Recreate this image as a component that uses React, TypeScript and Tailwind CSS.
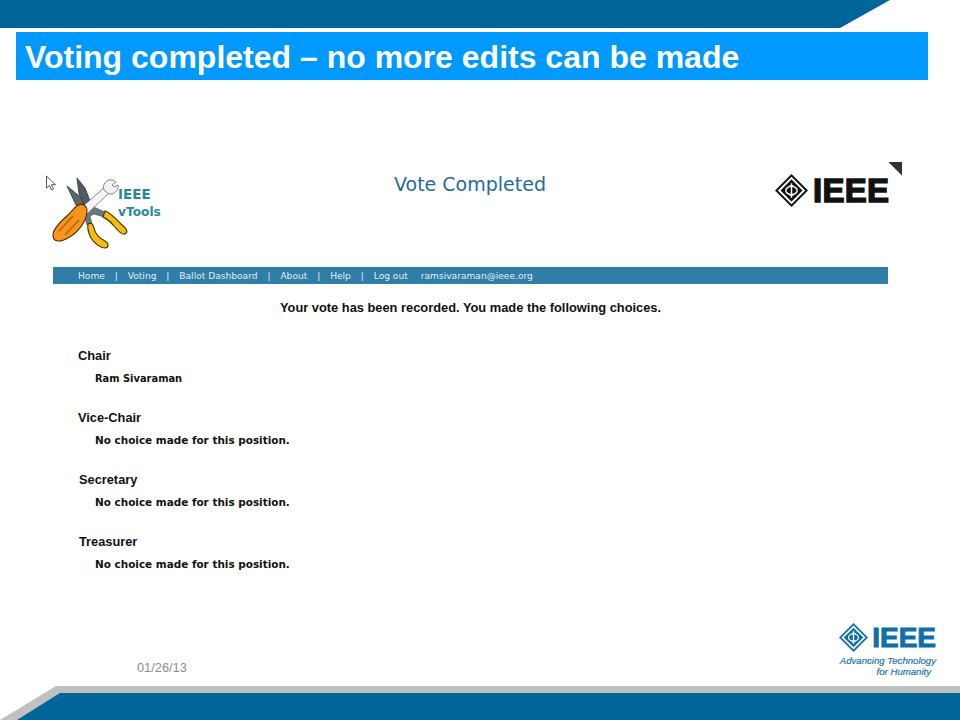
import React from "react";

const sans = "font-['Liberation_Sans',Arial,sans-serif]";
const verdana = "font-['DejaVu_Sans',Verdana,sans-serif]";

const navItems = ["Home", "Voting", "Ballot Dashboard", "About", "Help", "Log out"];

const positions = [
  { title: "Chair", choice: "Ram Sivaraman", indent: "ml-[78px]", size: "text-[9.9px]" },
  { title: "Vice-Chair", choice: "No choice made for this position.", indent: "ml-[78px]", size: "text-[10.45px]" },
  { title: "Secretary", choice: "No choice made for this position.", indent: "ml-[79px]", size: "text-[10.45px]" },
  { title: "Treasurer", choice: "No choice made for this position.", indent: "ml-[79px]", size: "text-[10.45px]" },
];

function Diamond({ size, outer, inner }: { size: number; outer: string; inner: string }) {
  return (
    <svg width={size} height={size} viewBox="0 0 32 32" className="shrink-0">
      <path d="M16 0 32 16 16 32 0 16Z" fill={outer} />
      <path d="M16 4 28 16 16 28 4 16Z" fill="none" stroke={inner} strokeWidth="1.8" />
      <ellipse cx="16" cy="16" rx="5.5" ry="4" fill="none" stroke={inner} strokeWidth="1.4" />
      <path d="M16 9v14M14 11.5h4M14 20.5h4" fill="none" stroke={inner} strokeWidth="1.4" />
    </svg>
  );
}

function ToolsIcon() {
  return (
    <svg width="80" height="72" viewBox="0 0 80 72" className="shrink-0">
      {/* pliers jaws and neck */}
      <path d="M15 8 26 17 38 29 33 35 24 27Z" fill="#5b6770" stroke="#2a3238" strokeWidth="0.8" />
      <path d="M25 0 33 10 40 28 34 30 27 16Z" fill="#4f5b64" stroke="#2a3238" strokeWidth="0.8" />
      <path d="M34 27 44 30 55 35 52 39 42 36 38 38 40 46 35 47 32 36Z" fill="#6b777e" stroke="#3a4248" strokeWidth="0.6" />
      {/* pliers handles */}
      <path d="M53 33C59 35 64 41 69 46 74 50 77 54 73 56 70 57 66 53 62 48 59 44 55 41 51 39Z" fill="#f5bd12" stroke="#3d3208" strokeWidth="1.1" />
      <path d="M36 46C39 44 41 46 42 50 43 55 47 60 53 63 57 65 57 70 53 70 48 70 42 65 39 60 37 56 35 51 36 46Z" fill="#f5bd12" stroke="#3d3208" strokeWidth="1.1" />
      {/* wrench */}
      <path d="M30 29 53 9 58 14 35 36Z" fill="#f6f6f6" stroke="#777" strokeWidth="0.9" />
      <path d="M52 12C50 7 54 1 60 2 62 2 63 3 64 4L60 7 62 9 66 7C67 12 62 17 57 16Z" fill="#f2f2f2" stroke="#777" strokeWidth="0.9" />
      {/* screwdriver handle */}
      <path d="M1 57C1 51 8 44 16 37 21 32 26 24 32 27 37 30 35 37 33 42 29 50 24 56 16 60 9 64 1 65 1 57Z" fill="#f7941d" stroke="#4e2c08" strokeWidth="1.1" />
      <path d="M7 53 21 38M13 57 27 42" stroke="#b8640d" strokeWidth="1.6" fill="none" />
    </svg>
  );
}

export default function App() {
  return (
    <div className={`relative flex h-[720px] w-[960px] flex-col overflow-hidden bg-white ${sans}`}>
      <div className="h-[28px] w-[890px] shrink-0 bg-[#006699] [clip-path:polygon(0_0,100%_0,840px_100%,0_100%)]" />

      <div className="mt-1 mr-8 ml-4 flex h-12 shrink-0 items-center bg-[#0099ff] pt-[2px] pl-[9px] text-[32px] leading-none font-bold text-white">
        Voting completed – no more edits can be made
      </div>

      {/* arrow pointer from the captured page */}
      <svg width="12" height="17" viewBox="0 0 12 17" className="absolute top-[175px] left-[45px]">
        <path d="M1.5 1v12l3-2.6 2 4.6 2-.9-2-4.4h4Z" fill="#fff" stroke="#555" strokeWidth="1" />
      </svg>

      <div className="mt-[80px] flex h-[107px] shrink-0 pl-[52px]">
        <div className="mt-[18px] flex h-[76px] w-[110px] items-start">
          <ToolsIcon />
          <div className={`-ml-[14px] mt-[7px] leading-[18px] font-bold text-[#2a8a96] ${verdana}`}>
            <div className="text-[13.5px] font-semibold">IEEE</div>
            <div className="text-[12.2px]">vTools</div>
          </div>
        </div>
        <div className={`ml-[232px] mt-[12px] w-[152px] text-[19px] leading-6 whitespace-nowrap text-[#1f6e93] ${verdana}`}>
          Vote Completed
        </div>
        <div className="ml-[229px] flex items-start">
          <div className="mt-[14px] flex items-center gap-[5px]">
            <Diamond size={33} outer="#111" inner="#fff" />
            <span className="text-[33px] leading-none font-bold tracking-[0.3px] text-[#111] [-webkit-text-stroke:1.4px_#111]">
              IEEE
            </span>
          </div>
          <div className="mt-[2px] -ml-px h-[14px] w-[14px] bg-[#333] [clip-path:polygon(0_0,100%_0,100%_100%)]" />
        </div>
      </div>

      <div
        className={`mr-[72px] ml-[53px] flex h-[17px] shrink-0 items-center bg-[#2e7ea8] pt-[2px] pl-[25px] text-[9.1px] text-[#e3edf3] ${verdana}`}
      >
        {navItems.map((item, i) => (
          <React.Fragment key={item}>
            <span>{item}</span>
            {i < navItems.length - 1 && <span className="px-[9.9px]">|</span>}
          </React.Fragment>
        ))}
        <span className="ml-[13px]">ramsivaraman@ieee.org</span>
      </div>

      <div className="mt-4 shrink-0 pr-[19px] text-center text-[12.85px] leading-[16px] font-bold text-[#111]">
        Your vote has been recorded. You made the following choices.
      </div>

      <div className="mt-[32px] flex shrink-0 flex-col gap-[24px]">
        {positions.map((p) => (
          <div key={p.title} className="h-[38px]">
            <div className={`${p.indent} text-[12.8px] leading-[16px] font-bold text-[#111]`}>{p.title}</div>
            <div className={`mt-[8px] ml-[95px] leading-[13px] font-bold text-[#111] ${p.size} ${verdana}`}>
              {p.choice}
            </div>
          </div>
        ))}
      </div>

      <div className="mt-auto flex shrink-0 items-end justify-between pr-6 pl-[137px]">
        <div className="pb-[10px] text-[12.8px] leading-[16px] text-[#8c8c8c]">01/26/13</div>
        <div className="mb-[9px] flex flex-col items-end">
          <div className="flex items-center gap-[4px]">
            <Diamond size={29} outer="#0f6fa6" inner="#fff" />
            <span className="text-[28px] leading-none font-bold text-[#0f6fa6] [-webkit-text-stroke:1px_#0f6fa6]">
              IEEE
            </span>
          </div>
          <div className="mt-[3px] text-right text-[9.6px] leading-[11px] text-[#1a75aa] italic [-webkit-text-stroke:0.2px_#1a75aa]">
            <div>Advancing Technology</div>
            <div className="pr-[5px]">for Humanity</div>
          </div>
        </div>
      </div>

      <div className="h-[34px] shrink-0 bg-[#c0c0c0] [clip-path:polygon(56px_0,100%_0,100%_100%,0_100%)]">
        <div className="mt-[7px] ml-[17px] h-[27px] bg-[#006699] [clip-path:polygon(43px_0,100%_0,100%_100%,0_100%)]" />
      </div>
    </div>
  );
}
